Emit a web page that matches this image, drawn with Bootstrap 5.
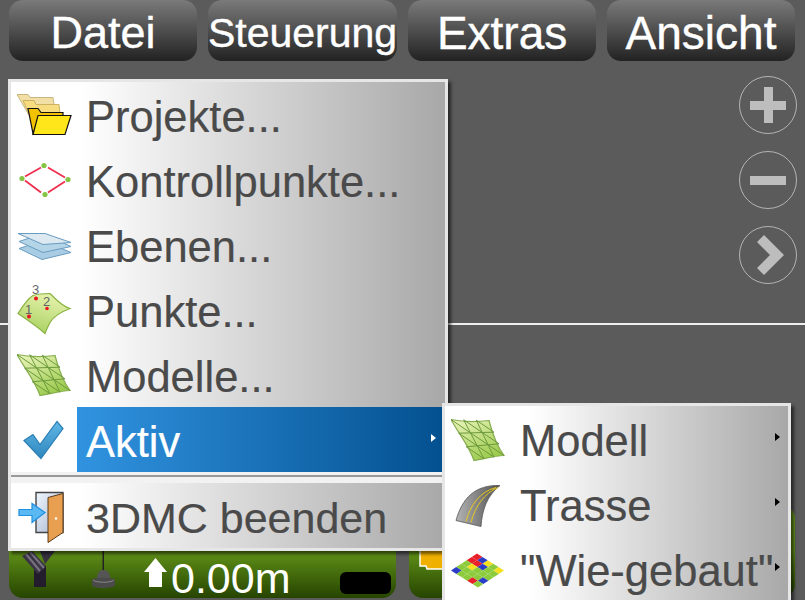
<!DOCTYPE html>
<html lang="de">
<head>
<meta charset="UTF-8">
<meta name="viewport" content="width=device-width, initial-scale=1.0">
<title>3DMC Menu</title>
<link href="https://cdn.jsdelivr.net/npm/bootstrap@5.3.3/dist/css/bootstrap.min.css" rel="stylesheet">
<style>
html, body { height: 600px; overflow: hidden; }
body { background: #5b5b5b; font-family: "Liberation Sans", Arial, sans-serif; }
.screen { height: 600px; }
.top-bar { gap: 11px; padding: 0 10px 0 9px; }
.top-btn { flex: 1 1 0; height: 61px; padding: 5px 0 0; border: 0; border-radius: 14px; color: #fff; font-size: 46px; line-height: 56px; white-space: nowrap; -webkit-text-stroke: .4px #fff; background: linear-gradient(#7a7a7a, #222); }
.top-btn-mid { font-size: 45px; }
.top-btn-narrow { font-size: 41px; }
.zoom-col { gap: 17px; margin: 15px 8px 0 0; }
.zoom-ico { display: block; width: 58px; height: 58px; }
.hline { height: 2px; margin-top: 39px; background: #eee; }
.status-row { gap: 13px; padding: 0 10px 2px 9px; }
.status-box { flex: 1 1 0; height: 93px; border-radius: 14px; padding-left: 13px; background: linear-gradient(#6a9a20 0, #5f9018 50%, #264400 100%); }
.st-tower { width: 34px; height: 36px; margin-bottom: 11px; }
.st-ant { width: 24px; height: 37px; margin: 0 0 10px 36px; }
.st-arrow { width: 23px; height: 29px; margin: 0 0 11px 28px; }
.st-val { margin: 0 0 2px 4px; color: #fff; font-size: 43px; line-height: 36px; }
.st-led { width: 51px; height: 22px; margin: 0 5px 4px auto; border-radius: 6px; background: #000; }
.st-flag { width: 24px; height: 30px; margin: 0 0 28px -3px; }
.menu-box { margin: 0; padding: 0; border: 3px solid #e6e6e6; border-radius: 0; box-shadow: 3px 3px 3px rgba(0,0,0,.55); color: #4a4a4a; }
.menu-main { top: 79px; left: 8px; width: 440px; height: 472px; background: linear-gradient(90deg, #fff 0, #fff 70px, #a8a8a8 100%); }
.menu-sub { top: 403px; left: 442px; width: 349px; height: 215px; background: linear-gradient(90deg, #fff 0, #fff 85px, #a8a8a8 100%); }
.menu-row { height: 65px; padding: 0; font-size: 43.5px; color: #4a4a4a; -webkit-text-stroke: .2px; }
.menu-row.active, .menu-row:hover { background: transparent; color: #4a4a4a; }
.menu-row-tight { font-size: 43px; }
.row-ico { flex: none; width: 56px; height: 56px; margin: 0 4px 0 6px; }
.menu-sub .row-ico { margin: 0 0 0 5px; }
.row-label { height: 65px; padding: 6px 0 0 9px; }
.menu-sub .row-label { padding-left: 14px; }
.menu-row.active .row-label { color: #fff; background: linear-gradient(90deg, #3193e0, #03508f); }
.row-arrow { width: 0; height: 0; margin: -9px 9px 0 auto; border-style: solid; border-width: 4px 0 4px 5px; border-color: transparent transparent transparent #000; }
.menu-sub .row-arrow { margin-right: 8px; }
.menu-row.active .row-arrow { border-left-color: #fff; }
.menu-sep { height: 11px; margin: 0; border: 0; opacity: 1; background: linear-gradient(#f2f2f2 0, #f2f2f2 3px, #999 3px, #999 5px, #f2f2f2 5px); }
.ico-num { font-family: "Liberation Sans", Arial, sans-serif; font-size: 13px; fill: #666; -webkit-text-stroke: 0; }
</style>
</head>
<body>

<svg width="0" height="0" class="position-absolute">
  <defs>
    <linearGradient id="gMesh" x1="0" y1="0" x2="0.6" y2="1"><stop offset="0" stop-color="#eef6c0"/><stop offset="1" stop-color="#9ccb4e"/></linearGradient>
    <symbol id="meshIco" viewBox="0 0 56 56">
      <path d="M0 7.5C12 10 26 10 38 8.500C41 20 45 33 53 43.500C43 44 33 47 23 48.500C18 34 8 22 0 7.500Z" fill="url(#gMesh)" stroke="#86ad4e" stroke-width="1.200"/>
      <path d="M12.700 7.800L19.500 20.900L26.200 33.800L33 46.800M25.300 8.200L31.200 20.500L37.100 32.800L43 45.200M7.700 21.200L19.500 20.900L31.200 20.500L43 20.200M15.300 34.800L26.200 33.800L37.100 32.800L48 31.800M0 7.500L19.500 20.900L37.100 32.800L53 43.500M12.700 7.800L31.200 20.500L48 31.800M7.700 21.200L26.200 33.800L43 45.200M25.300 8.200L43 20.200M15.300 34.800L33 46.800" fill="none" stroke="#6d9a3c" stroke-width="1"/>
    </symbol>
  </defs>
</svg>

<div class="screen d-flex flex-column position-relative">
  <div class="top-bar d-flex">
    <button type="button" class="btn top-btn top-btn-mid">Datei</button>
    <button type="button" class="btn top-btn top-btn-narrow">Steuerung</button>
    <button type="button" class="btn top-btn">Extras</button>
    <button type="button" class="btn top-btn">Ansicht</button>
  </div>

  <div class="zoom-col d-flex flex-column align-self-end">
    <svg class="zoom-ico" viewBox="0 0 58 58"><circle cx="29" cy="29" r="28.500" fill="none" stroke="#b4b4b4" stroke-width="1"/><path d="M11 25H25V11H34V25H47V34H34V47H25V34H11Z" fill="#bdbdbd"/></svg>
    <svg class="zoom-ico" viewBox="0 0 58 58"><circle cx="29" cy="29" r="28.500" fill="none" stroke="#b4b4b4" stroke-width="1"/><path d="M11 25H47V34H11Z" fill="#bdbdbd"/></svg>
    <svg class="zoom-ico" viewBox="0 0 58 58"><circle cx="29" cy="29" r="28.500" fill="none" stroke="#b4b4b4" stroke-width="1"/><path d="M18 16L25 9L45 29L25 49L18 42L31 29Z" fill="#bdbdbd"/></svg>
  </div>

  <div class="hline"></div>
  <div class="flex-grow-1"></div>

  <div class="status-row d-flex">
    <div class="status-box d-flex align-items-end">
      <svg class="st-tower" viewBox="22 551 34 36">
        <path d="M34 566H46V587H34Z" fill="#221c2c"/>
        <path d="M22 556L32 551L46 566L38 574Z" fill="#3a3444"/>
        <path d="M26 554L40 571M30 552L44 568" stroke="#77727f" stroke-width="2"/>
        <path d="M40 551H55L45 564Z" fill="#37313f"/>
      </svg>
      <svg class="st-ant" viewBox="92 551 24 37">
        <path d="M102.500 551H104V572H102.500Z" fill="#222"/>
        <path d="M97 578C97 572 100 570 103.500 570C107 570 110 572 110 578Z" fill="#555"/>
        <path d="M92 580C92 577 115 577 115 580V585C115 589 92 589 92 585Z" fill="#4a4a4a"/>
        <path d="M93 580C96 583 111 583 114 580" fill="none" stroke="#888" stroke-width="1"/>
      </svg>
      <svg class="st-arrow" viewBox="143 559 23 29"><path d="M154.500 559L166 573H161V588H148V573H143Z" fill="#fff"/></svg>
      <span class="st-val">0.00m</span>
      <div class="st-led"></div>
    </div>
    <div class="status-box d-flex align-items-end">
      <svg class="st-flag" viewBox="0 0 24 30"><path d="M1 0H24V29H8L7 26H1Z" fill="#f0b000" stroke="#fff" stroke-width="1.500"/></svg>
    </div>
  </div>

  <div class="dropdown-menu show menu-box menu-main position-absolute">
    <a class="dropdown-item menu-row d-flex align-items-center" href="#">
      <svg class="row-ico" viewBox="17 86.500 56 56">
        <path d="M17 94H28L30 97H53L56 118H31Z" fill="#f1dfa6" stroke="#c9b67e"/>
        <path d="M23 100H34L36 104H59L61 122H33Z" fill="#f7dc80" stroke="#cdb264"/>
        <path d="M28 108H38L41 112H63V118H40L33 133Z" fill="#f2c200" stroke="#111" stroke-width="1.200"/>
        <path d="M38 115H71L65 134H33Z" fill="#ffe61a" stroke="#111" stroke-width="1.200"/>
      </svg>
      <span class="row-label flex-grow-1 d-flex align-items-center">Projekte...</span>
    </a>
    <a class="dropdown-item menu-row d-flex align-items-center" href="#">
      <svg class="row-ico" viewBox="17 151.500 56 56">
        <path d="M25 176L41 167M48 167L65 177M65 181L48 192M41 192L25 180" fill="none" stroke="#f0304e" stroke-width="1.800"/>
        <circle cx="22" cy="178" r="2.600" fill="#86c445"/><circle cx="44" cy="165" r="2.600" fill="#86c445"/><circle cx="68" cy="179" r="2.600" fill="#86c445"/><circle cx="45" cy="194" r="2.600" fill="#86c445"/>
      </svg>
      <span class="row-label flex-grow-1 d-flex align-items-center">Kontrollpunkte...</span>
    </a>
    <a class="dropdown-item menu-row d-flex align-items-center" href="#">
      <svg class="row-ico" viewBox="17 216.500 56 56">
        <path d="M19 248L43 240L71 252L42 259Z" fill="#a8cce4" stroke="#6a9cc0"/>
        <path d="M19 241L43 233L71 246L43 252Z" fill="#b4d4e8" stroke="#6a9cc0"/>
        <path d="M18 233H45L71 242L43 244Z" fill="#dce9f1" stroke="#6a9cc0"/>
      </svg>
      <span class="row-label flex-grow-1 d-flex align-items-center">Ebenen...</span>
    </a>
    <a class="dropdown-item menu-row d-flex align-items-center" href="#">
      <svg class="row-ico" viewBox="17 281.500 56 56">
        <defs><linearGradient id="gHill" x1="0.700" y1="0" x2="0.300" y2="1"><stop offset="0" stop-color="#e8f4b0"/><stop offset="1" stop-color="#a8d060"/></linearGradient></defs>
        <path d="M18 313C23 305 28 298 33 295C39 293 44 293 50 293C56 299 62 306 70 308C62 311 54 315 50 322C48 326 46 330 45 333C36 325 27 319 18 313Z" fill="url(#gHill)" stroke="#8ab243" stroke-width="1.200"/>
        <circle cx="36" cy="298" r="2" fill="#e8141e"/><circle cx="47" cy="308" r="1.800" fill="#e8141e"/><circle cx="29" cy="316" r="2" fill="#e8141e"/>
        <text class="ico-num" x="32" y="293">3</text><text class="ico-num" x="43" y="305">2</text><text class="ico-num" x="25" y="313">1</text>
      </svg>
      <span class="row-label flex-grow-1 d-flex align-items-center">Punkte...</span>
    </a>
    <a class="dropdown-item menu-row d-flex align-items-center" href="#">
      <svg class="row-ico"><use href="#meshIco" width="56" height="56"/></svg>
      <span class="row-label flex-grow-1 d-flex align-items-center">Modelle...</span>
    </a>
    <a class="dropdown-item menu-row active d-flex align-items-center" href="#">
      <svg class="row-ico" viewBox="17 411.500 56 56">
        <defs><linearGradient id="gCheck" x1="0" y1="0" x2="0" y2="1"><stop offset="0" stop-color="#5fb8e6"/><stop offset="1" stop-color="#2f86bd"/></linearGradient></defs>
        <path d="M24 440L33 434L40 444L57 421L63 428L41 458Z" fill="url(#gCheck)" stroke="#2a7fb5" stroke-width="1.200"/>
      </svg>
      <span class="row-label flex-grow-1 d-flex align-items-center">Aktiv<span class="row-arrow"></span></span>
    </a>
    <hr class="menu-sep">
    <a class="dropdown-item menu-row menu-row-tight d-flex align-items-center" href="#">
      <svg class="row-ico" viewBox="17 487.500 56 56">
        <defs><linearGradient id="gFrame" x1="0" y1="0" x2="1" y2="1"><stop offset="0" stop-color="#eef5fd"/><stop offset="1" stop-color="#a6b6cf"/></linearGradient></defs>
        <path d="M36 492H63V532H36Z" fill="url(#gFrame)" stroke="#444" stroke-width="1.400"/>
        <path d="M48 497L63 493V532L48 542Z" fill="#e8a050" stroke="#5a3a1a" stroke-width="1"/>
        <circle cx="56" cy="518" r="1.200" fill="#fff"/>
        <path d="M19 509H32V503L45 512L32 522V515H19Z" fill="#5ab8f2" stroke="#2090e0" stroke-width="1.200"/>
      </svg>
      <span class="row-label flex-grow-1 d-flex align-items-center">3DMC beenden</span>
    </a>
  </div>

  <div class="dropdown-menu show menu-box menu-sub position-absolute">
    <a class="dropdown-item menu-row d-flex align-items-center" href="#">
      <svg class="row-ico"><use href="#meshIco" x="1" y="1" width="56" height="56"/></svg>
      <span class="row-label flex-grow-1 d-flex align-items-center">Modell<span class="row-arrow"></span></span>
    </a>
    <a class="dropdown-item menu-row d-flex align-items-center" href="#">
      <svg class="row-ico" viewBox="450 475.500 56 56">
        <defs><linearGradient id="gRoad" x1="0" y1="0" x2="1" y2="0"><stop offset="0" stop-color="#b4b4b4"/><stop offset="1" stop-color="#505050"/></linearGradient></defs>
        <path d="M456 520C462 498 475 484 500 485C487 495 482 510 481 526Z" fill="url(#gRoad)" stroke="#555" stroke-width="0.800"/>
        <path d="M466 521C470 505 480 491 496 487M471 522C475 506 484 493 498 487" fill="none" stroke="#e6c81e" stroke-width="1"/>
      </svg>
      <span class="row-label flex-grow-1 d-flex align-items-center">Trasse<span class="row-arrow"></span></span>
    </a>
    <a class="dropdown-item menu-row d-flex align-items-center" href="#">
      <svg class="row-ico" viewBox="450 540.500 56 56">
        <g transform="matrix(5.400 3.400 -5.200 3.400 477 553)">
          <rect x="0" y="0" width="1" height="1" fill="#e8202a"/><rect x="1" y="0" width="1" height="1" fill="#2a3cc8"/><rect x="2" y="0" width="1" height="1" fill="#f5e020"/><rect x="3" y="0" width="1" height="1" fill="#8ccc3c"/><rect x="4" y="0" width="1" height="1" fill="#f5e020"/>
          <rect x="0" y="1" width="1" height="1" fill="#e8202a"/><rect x="1" y="1" width="1" height="1" fill="#e8202a"/><rect x="2" y="1" width="1" height="1" fill="#2a3cc8"/><rect x="3" y="1" width="1" height="1" fill="#8ccc3c"/><rect x="4" y="1" width="1" height="1" fill="#8ccc3c"/>
          <rect x="0" y="2" width="1" height="1" fill="#8ccc3c"/><rect x="1" y="2" width="1" height="1" fill="#f5e020"/><rect x="2" y="2" width="1" height="1" fill="#8ccc3c"/><rect x="3" y="2" width="1" height="1" fill="#8ccc3c"/><rect x="4" y="2" width="1" height="1" fill="#8ccc3c"/>
          <rect x="0" y="3" width="1" height="1" fill="#8ccc3c"/><rect x="1" y="3" width="1" height="1" fill="#8ccc3c"/><rect x="2" y="3" width="1" height="1" fill="#8ccc3c"/><rect x="3" y="3" width="1" height="1" fill="#8ccc3c"/><rect x="4" y="3" width="1" height="1" fill="#2a3cc8"/>
          <rect x="0" y="4" width="1" height="1" fill="#2a3cc8"/><rect x="1" y="4" width="1" height="1" fill="#8ccc3c"/><rect x="2" y="4" width="1" height="1" fill="#8ccc3c"/><rect x="3" y="4" width="1" height="1" fill="#e8202a"/><rect x="4" y="4" width="1" height="1" fill="#8ccc3c"/>
        </g>
      </svg>
      <span class="row-label flex-grow-1 d-flex align-items-center">"Wie-gebaut"<span class="row-arrow"></span></span>
    </a>
  </div>
</div>

<script src="https://cdn.jsdelivr.net/npm/bootstrap@5.3.3/dist/js/bootstrap.bundle.min.js"></script>
</body>
</html>
